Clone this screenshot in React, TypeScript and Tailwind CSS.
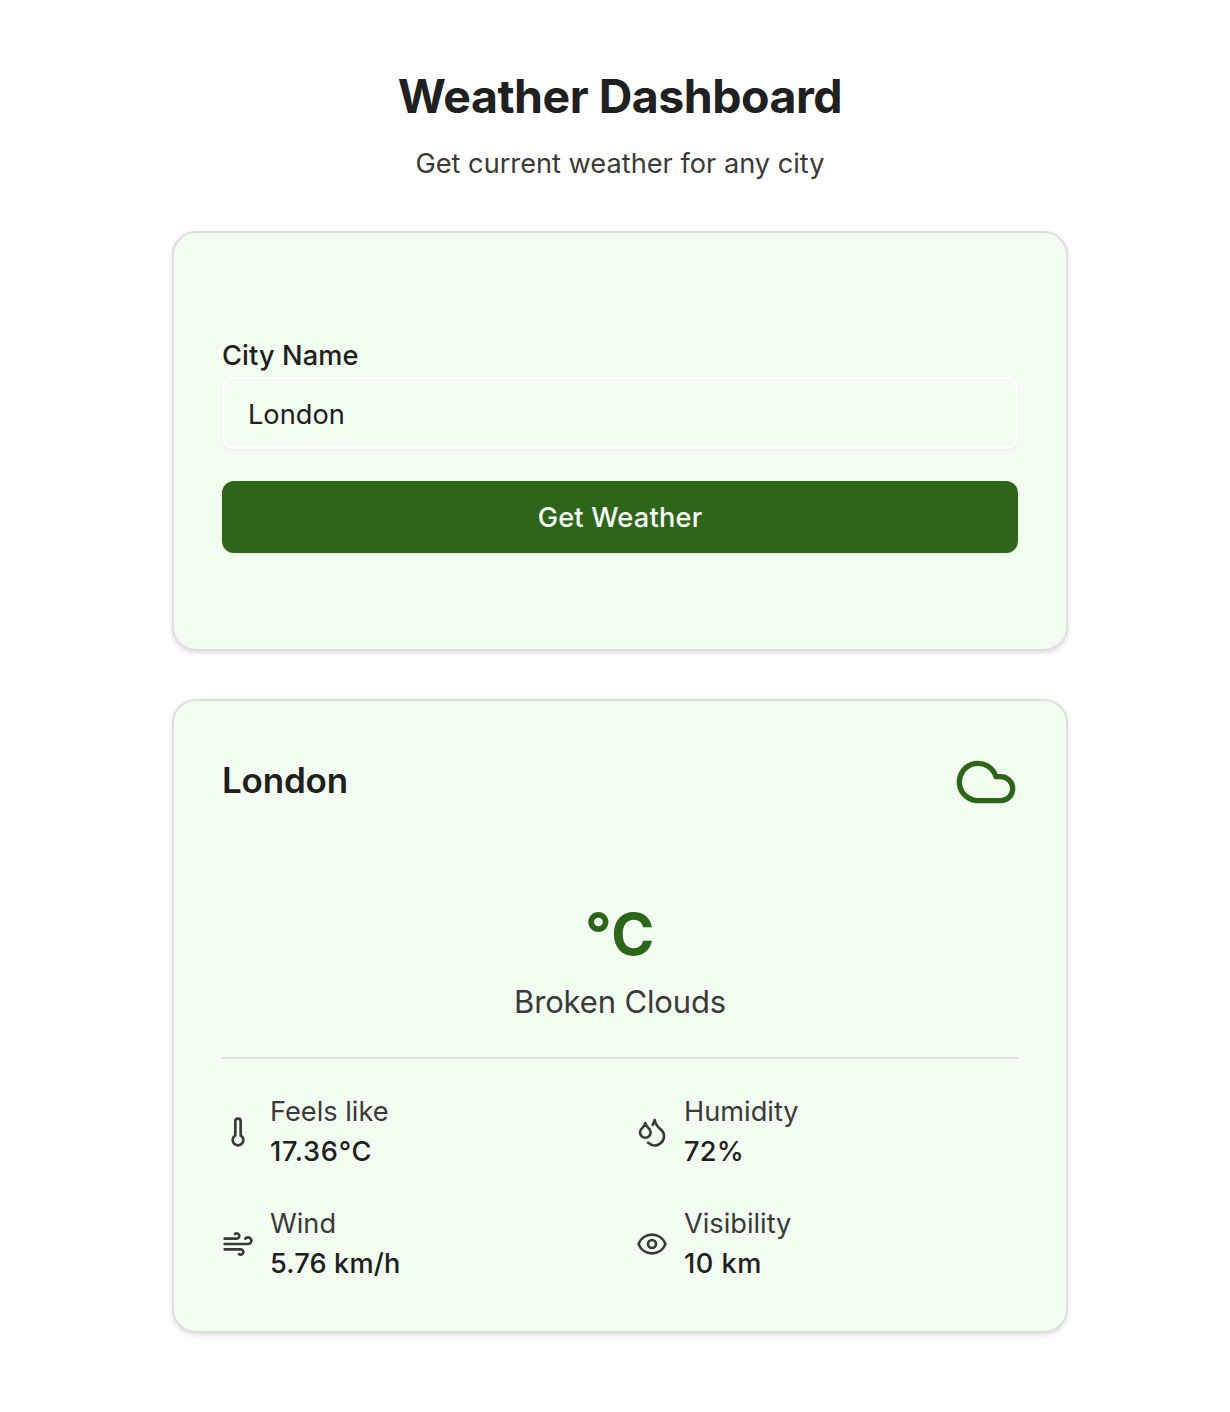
import React from "react";
import { Cloud, Droplets, Eye, Thermometer, Wind, type LucideIcon } from "lucide-react";

const stats: { label: string; value: string; icon: LucideIcon; tracking: string }[] = [
  { label: "Feels like", value: "17.36°C", icon: Thermometer, tracking: "tracking-[0.7px]" },
  { label: "Humidity", value: "72%", icon: Droplets, tracking: "tracking-[0.2px]" },
  { label: "Wind", value: "5.76 km/h", icon: Wind, tracking: "tracking-[0.15px]" },
  { label: "Visibility", value: "10 km", icon: Eye, tracking: "tracking-[0.5px]" },
];

export default function App() {
  return (
    <main className="h-[1412px] bg-white pt-16 font-['Inter',sans-serif] text-[#202020]">
      <div className="ml-[172px] w-[896px]">
        <header className="text-center">
          <h1 className="text-[46.5px] leading-[64px] font-bold tracking-[-0.5px]">Weather Dashboard</h1>
          <p className="mt-4 text-[27.2px] leading-10 text-[#3a3a3a]">Get current weather for any city</p>
        </header>
        <section className="mt-[47px] h-[420px] rounded-[24px] border-2 border-[#dedede] bg-[#f2fcf0] px-12 pt-[109px] shadow-[0_2px_6px_rgba(0,0,0,0.1),0_2px_4px_-2px_rgba(0,0,0,0.1)]">
          <label htmlFor="city" className="block text-[27.2px] leading-7 font-medium tracking-[0.1px]">City Name</label>
          <input id="city" defaultValue="London" className="mt-[7px] block h-[72px] w-full rounded-xl border-2 border-white px-6 pt-[3px] text-[27.2px] shadow-[0_2px_4px_rgba(0,0,0,0.05)] outline-none" />
          <button className="mt-8 block h-[72px] w-full rounded-xl bg-[#2d661b] pt-[3px] text-[27.2px] font-medium tracking-[0.2px] text-white shadow-[0_2px_4px_rgba(0,0,0,0.05)]">Get Weather</button>
        </section>
        <section className="mt-12 h-[634px] rounded-[24px] border-2 border-[#dedede] bg-[#f2fcf0] px-12 pt-[49px] shadow-[0_2px_6px_rgba(0,0,0,0.1),0_2px_4px_-2px_rgba(0,0,0,0.1)]">
          <div className="flex h-16 items-center justify-between">
            <h2 className="pb-[5px] text-[35px] leading-[48px] font-semibold tracking-[-0.2px]">London</h2>
            <Cloud size={64} className="text-[#2d661b]" />
          </div>
          <div className="mt-[90px] text-center">
            <div className="text-[58.2px] leading-[60px] font-bold tracking-[0.5px] text-[#2d661b]">°C</div>
            <p className="mt-[14px] text-[31px] leading-[48px] tracking-[-0.15px] text-[#3a3a3a]">Broken Clouds</p>
          </div>
          <div className="mt-[31px] grid grid-cols-2 gap-x-8 gap-y-8 border-t-2 border-[#dedede] pt-[33px]">
            {stats.map(({ label, value, icon: Icon, tracking }) => (
              <div key={label} className="flex items-center gap-4">
                <Icon size={32} className="text-[#3a3a3a]" />
                <div className="text-[27.2px] leading-10">
                  <p className="text-[#3a3a3a]">{label}</p>
                  <p className={`font-medium ${tracking}`}>{value}</p>
                </div>
              </div>
            ))}
          </div>
        </section>
      </div>
    </main>
  );
}
